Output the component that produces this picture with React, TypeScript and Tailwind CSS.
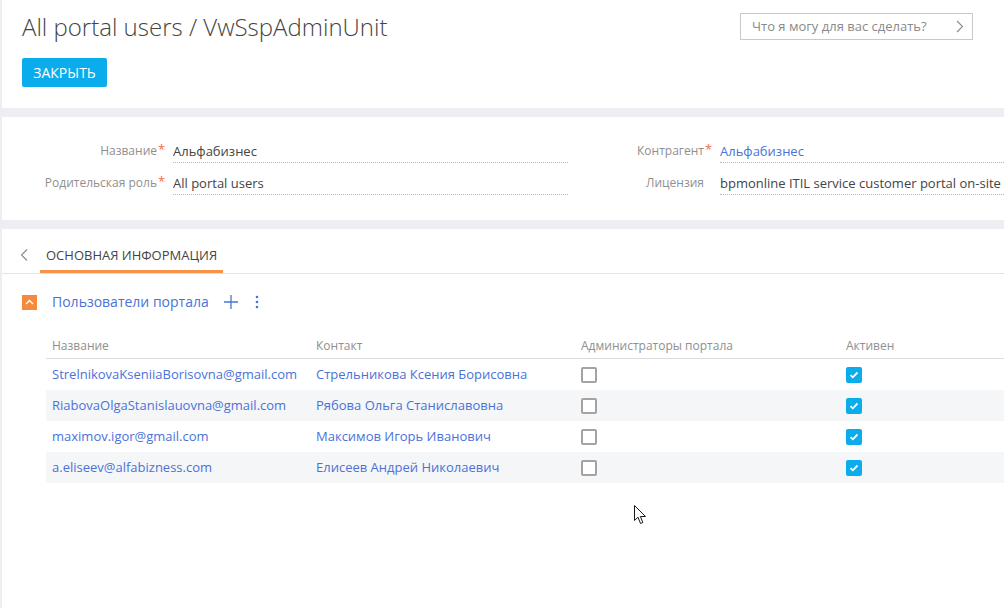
import React from "react";

const users = [
    {email: "StrelnikovaKseniiaBorisovna@gmail.com", contact: "Стрельникова Ксения Борисовна"},
    {email: "RiabovaOlgaStanislauovna@gmail.com", contact: "Рябова Ольга Станиславовна"},
    {email: "maximov.igor@gmail.com", contact: "Максимов Игорь Иванович"},
    {email: "a.eliseev@alfabizness.com", contact: "Елисеев Андрей Николаевич"},
];

function Field({label, required, value, link, wide}: {label: string; required?: boolean; value: string; link?: boolean; wide?: boolean}) {
    return (
        <div className="flex items-start">
            <span className={`${wide ? "w-[155px]" : "w-[136px]"} text-right text-[12px] leading-[20px] text-[#8f8f8f] whitespace-nowrap`}>{label}</span>
            <span className="w-[8px] pl-[1px] text-[13px] leading-[16px] text-[#f26b52]">{required ? "*" : ""}</span>
            <div
                className={`ml-[8px] ${wide ? "w-[395px]" : "flex-1"} whitespace-nowrap overflow-hidden border-b border-dotted border-[#b8b8b8] pb-[1px] text-[13px] leading-[20px] ${link ? "text-[#4a72d9]" : "text-[#444]"}`}
            >
                {value}
            </div>
        </div>
    );
}

function Checkbox({checked}: {checked: boolean}) {
    if (checked) {
        return (
            <span className="flex w-[16px] h-[16px] items-center justify-center rounded-[2px] bg-[#0bacec]">
                <svg width="10" height="8" viewBox="0 0 10 8" fill="none">
                    <path d="M1.5 4.2 L3.8 6.3 L8.5 1.5" stroke="white" strokeWidth="1.8" />
                </svg>
            </span>
        );
    }
    return <span className="block w-[16px] h-[16px] rounded-[2px] border-2 border-[#a3a3a3] bg-white" />;
}

export default function App() {
    return (
        <div className="relative w-[1004px] h-[608px] overflow-hidden bg-[#eceef1] pl-[2px] flex flex-col gap-[9px] font-['Open_Sans',sans-serif]">
            {/* header */}
            <div className="h-[108px] shrink-0 bg-white flex justify-between">
                <div className="pl-[20px] pt-[11px]">
                    <h1 className="text-[24px] leading-[32px] font-light text-[#444] whitespace-nowrap">All portal users / VwSspAdminUnit</h1>
                    <button className="mt-[15px] h-[29px] w-[85px] rounded-[2px] bg-[#0bacec] text-[14px] text-white uppercase">
                        Закрыть
                    </button>
                </div>
                <div className="mt-[13px] mr-[31px] w-[233px] h-[27px] border border-[#c8c8c8] flex items-center justify-between pl-[11px] pr-[8px]">
                    <span className="text-[13px] text-[#8a8a8a] whitespace-nowrap">Что я могу для вас сделать?</span>
                    <svg width="8" height="13" viewBox="0 0 8 13" fill="none">
                        <path d="M1 1 L6.5 6.5 L1 12" stroke="#8a8a8a" strokeWidth="1.1" />
                    </svg>
                </div>
            </div>

            {/* fields */}
            <div className="h-[103px] shrink-0 bg-white pt-[24px] flex flex-col gap-[10px]">
                <div className="flex">
                    <Field label="Название" required value="Альфабизнес" wide />
                    <div className="flex-1">
                        <Field label="Контрагент" required value="Альфабизнес" link />
                    </div>
                </div>
                <div className="flex">
                    <Field label="Родительская роль" required value="All portal users" wide />
                    <div className="flex-1">
                        <Field label="Лицензия" value="bpmonline ITIL service customer portal on-site" />
                    </div>
                </div>
            </div>

            {/* tabs and detail */}
            <div className="flex-1 bg-white">
                <div className="flex items-start h-[45px] border-b border-[#e3e3e3]">
                    <div className="pl-[18px] pt-[20px] w-[38px]">
                        <svg width="8" height="12" viewBox="0 0 8 12" fill="none">
                            <path d="M7 0.5 L1.5 6 L7 11.5" stroke="#8a8a8a" strokeWidth="1.1" />
                        </svg>
                    </div>
                    <div className="px-[6px] pt-[16px] pb-[5px] leading-[20px] border-b-[3px] border-[#f7924a] text-[13px] text-[#444] uppercase whitespace-nowrap">
                        Основная информация
                    </div>
                </div>

                <div className="pl-[20px] pt-[18px] flex items-center">
                    <span className="flex w-[15px] h-[15px] items-center justify-center bg-[#f58a3f]">
                        <svg width="9" height="6" viewBox="0 0 9 6" fill="none">
                            <path d="M1 5 L4.5 1.5 L8 5" stroke="white" strokeWidth="1.3" />
                        </svg>
                    </span>
                    <span className="ml-[15px] text-[14px] leading-[20px] text-[#4a72d9]">Пользователи портала</span>
                    <svg className="ml-[15px]" width="14" height="14" viewBox="0 0 14 14" fill="none">
                        <path d="M7 0 V14 M0 7 H14" stroke="#4a72d9" strokeWidth="1.3" />
                    </svg>
                    <svg className="ml-[17px]" width="4" height="14" viewBox="0 0 4 14" fill="#4a72d9">
                        <circle cx="2" cy="2" r="1.3" />
                        <circle cx="2" cy="7" r="1.3" />
                        <circle cx="2" cy="12" r="1.3" />
                    </svg>
                </div>

                <div className="ml-[44px] mt-[24px]">
                    <div className="grid grid-cols-[264px_265px_265px_1fr] border-b border-[#dcdcdc] pb-[2px] text-[12px] leading-[20px] text-[#8f8f8f]">
                        <span className="pl-[6px]">Название</span>
                        <span className="pl-[6px]">Контакт</span>
                        <span className="pl-[6px]">Администраторы портала</span>
                        <span className="pl-[6px]">Активен</span>
                    </div>
                    {users.map((u, i) => (
                        <div
                            key={u.email}
                            className={`grid grid-cols-[264px_265px_265px_1fr] h-[31px] items-center text-[13px] text-[#4a72d9] ${i % 2 === 1 ? "bg-[#f5f6f8]" : "bg-white"}`}
                        >
                            <span className="pl-[6px] whitespace-nowrap">{u.email}</span>
                            <span className="pl-[6px] whitespace-nowrap">{u.contact}</span>
                            <span className="pl-[6px]"><Checkbox checked={false} /></span>
                            <span className="pl-[6px]"><Checkbox checked /></span>
                        </div>
                    ))}
                </div>
            </div>

            {/* mouse pointer */}
            <svg className="absolute left-[634px] top-[505px]" width="13" height="20" viewBox="0 0 13 20" fill="white">
                <path d="M0.5 0.5 V15.5 L4 12.2 L6.5 18.5 L8.8 17.5 L6.4 11.5 H11.5 Z" stroke="#1a1a1a" strokeWidth="1" />
            </svg>
        </div>
    );
}
